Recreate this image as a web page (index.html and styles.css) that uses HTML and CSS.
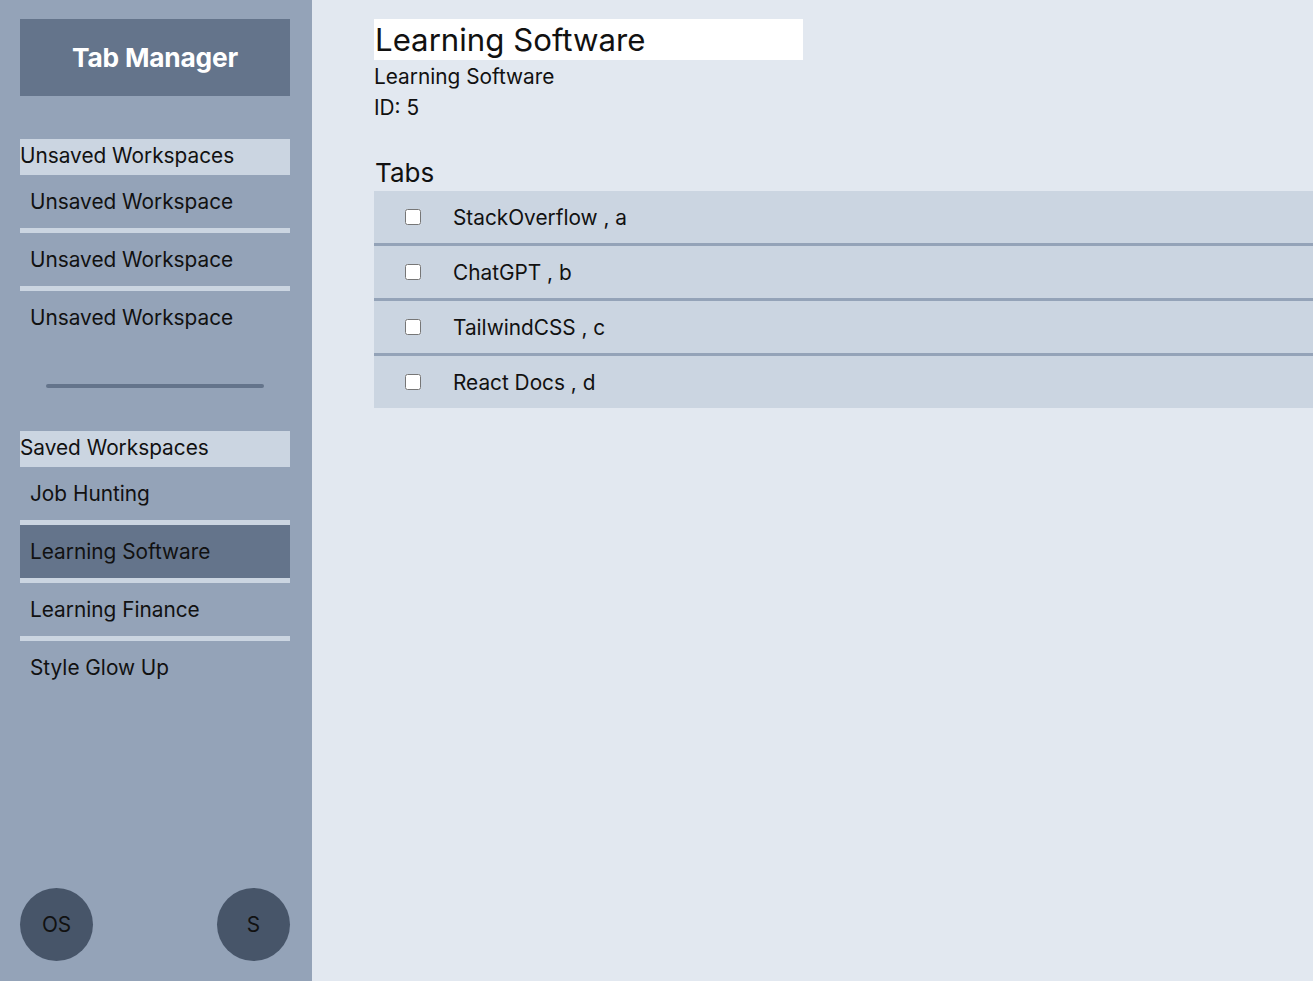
FILE: index.html
```html
<!DOCTYPE html>
<html lang="en">
<head>
<meta charset="utf-8">
<title>Tab Manager</title>
<link rel="stylesheet" href="styles.css">
</head>
<body>
<div class="app">
  <aside class="sidebar">
    <div class="brand">Tab Manager</div>
    <div class="section-head first">Unsaved Workspaces</div>
    <ul class="ws-list">
      <li class="ws-item">Unsaved Workspace</li>
      <li class="ws-item">Unsaved Workspace</li>
      <li class="ws-item">Unsaved Workspace</li>
    </ul>
    <div class="divider"></div>
    <div class="section-head">Saved Workspaces</div>
    <ul class="ws-list">
      <li class="ws-item">Job Hunting</li>
      <li class="ws-item active">Learning Software</li>
      <li class="ws-item">Learning Finance</li>
      <li class="ws-item">Style Glow Up</li>
    </ul>
    <div class="avatars">
      <div class="avatar">OS</div>
      <div class="avatar">S</div>
    </div>
  </aside>
  <main class="main">
    <input class="title-input" type="text" value="Learning Software">
    <div class="meta">Learning Software</div>
    <div class="meta">ID: 5</div>
    <h2 class="tabs-title">Tabs</h2>
    <ul class="tab-list">
      <li class="tab-row"><input type="checkbox" class="tab-check"><span class="tab-label">StackOverflow , a</span></li>
      <li class="tab-row"><input type="checkbox" class="tab-check"><span class="tab-label">ChatGPT , b</span></li>
      <li class="tab-row"><input type="checkbox" class="tab-check"><span class="tab-label">TailwindCSS , c</span></li>
      <li class="tab-row"><input type="checkbox" class="tab-check"><span class="tab-label">React Docs , d</span></li>
    </ul>
  </main>
</div>
</body>
</html>
```

FILE: styles.css
```css
* { box-sizing: border-box; }

html, body {
  margin: 0;
  padding: 0;
  height: 100%;
}

body {
  font-family: Inter, "Noto Sans", "Liberation Sans", sans-serif;
  color: #111;
  background: #e2e8f0;
}

.app {
  display: flex;
  height: 981px;
}

.sidebar {
  width: 312px;
  flex: 0 0 312px;
  background: #94a3b8;
  padding: 19px 22px 20px 20px;
  display: flex;
  flex-direction: column;
}

.brand {
  height: 77px;
  background: #64748b;
  color: #fff;
  font-weight: 700;
  font-size: 26.3px;
  display: flex;
  align-items: center;
  justify-content: center;
  letter-spacing: -0.2px;
}

.section-head {
  margin-top: 43px;
  height: 36px;
  line-height: 33px;
  background: #cbd5e1;
  font-size: 20.8px;
}

.ws-list {
  list-style: none;
  margin: 0;
  padding: 0;
}

.ws-item {
  height: 53px;
  line-height: 54px;
  padding-left: 10px;
  font-size: 20.8px;
  color: #111;
}

.ws-item + .ws-item {
  border-top: 5px solid #cbd5e1;
  height: 58px;
}

.ws-item.active {
  background: #64748b;
  background-clip: padding-box;
}

.divider {
  margin: 40px auto 0;
  width: 218px;
  height: 4px;
  border-radius: 2px;
  background: #64748b;
  flex: 0 0 4px;
}

.avatars {
  margin-top: auto;
  display: flex;
  justify-content: space-between;
}

.avatar {
  width: 73px;
  height: 73px;
  border-radius: 50%;
  background: #475569;
  color: #111;
  font-size: 20.8px;
  display: flex;
  align-items: center;
  justify-content: center;
}

.main {
  flex: 1;
  padding: 19px 0 0 62px;
  min-width: 0;
}

.title-input {
  display: block;
  width: 429px;
  height: 41px;
  border: none;
  outline: none;
  background: #fff;
  padding: 0 0 0 1px;
  margin: 0;
  font-family: inherit;
  font-size: 31.2px;
  color: #111;
}

.meta {
  font-size: 20.8px;
  line-height: 31px;
  padding-top: 1px;
}

.meta + .meta {
  padding-top: 0;
  margin-top: 0;
}

.tabs-title {
  margin: 32px 0 0 1px;
  font-size: 26px;
  font-weight: 400;
  height: 36px;
  line-height: 36px;
}

.tab-list {
  list-style: none;
  margin: 0;
  padding: 0;
}

.tab-row {
  height: 52px;
  background: #cbd5e1;
  display: flex;
  align-items: center;
  padding-left: 31px;
}

.tab-row + .tab-row {
  border-top: 3px solid #94a3b8;
  height: 55px;
}

.tab-check {
  width: 16px;
  height: 16px;
  margin: 0;
}

.tab-label {
  margin-left: 32px;
  font-size: 20.8px;
}
```
